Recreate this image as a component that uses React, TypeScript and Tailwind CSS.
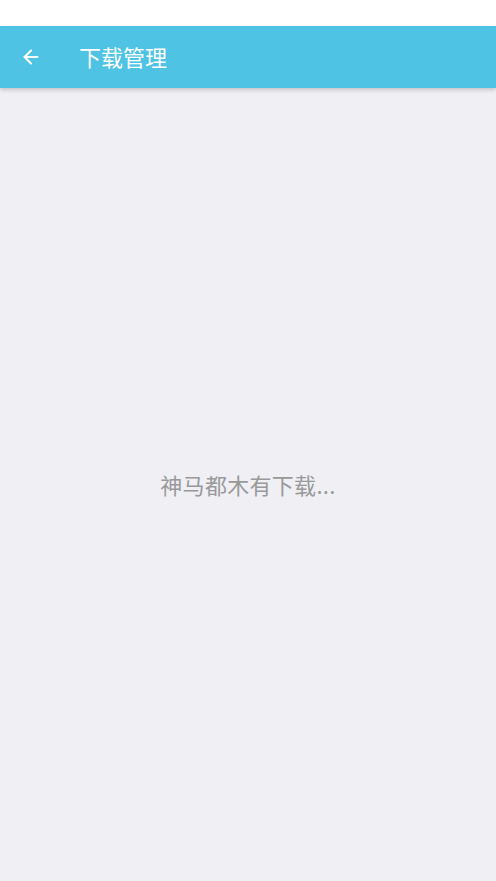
import { ArrowLeft } from 'lucide-react';

export default function App() {
  return (
    <div
      className="w-[496px] h-[881px] flex flex-col bg-[#efeff4] overflow-hidden"
      style={{ fontFamily: '"Noto Sans CJK SC", "Noto Sans", sans-serif' }}
    >
      {/* Status bar */}
      <div className="h-[26px] bg-white shrink-0" />

      {/* Header */}
      <div className="h-[62px] shrink-0 bg-[#4fc3e4] flex items-center shadow-[0_2px_4px_rgba(0,0,0,0.18)] relative z-10">
        <div className="w-[62px] flex items-center justify-center">
          <ArrowLeft className="w-[22px] h-[22px] text-white" strokeWidth={2.2} />
        </div>
        <h1 className="ml-[17px] text-[22px] text-white leading-none mt-[-2px]">下载管理</h1>
      </div>

      {/* Empty state */}
      <div className="flex-1 flex items-center justify-center">
        <p className="text-[22px] text-[#999999] tracking-[0.3px]">神马都木有下载...</p>
      </div>
    </div>
  );
}
